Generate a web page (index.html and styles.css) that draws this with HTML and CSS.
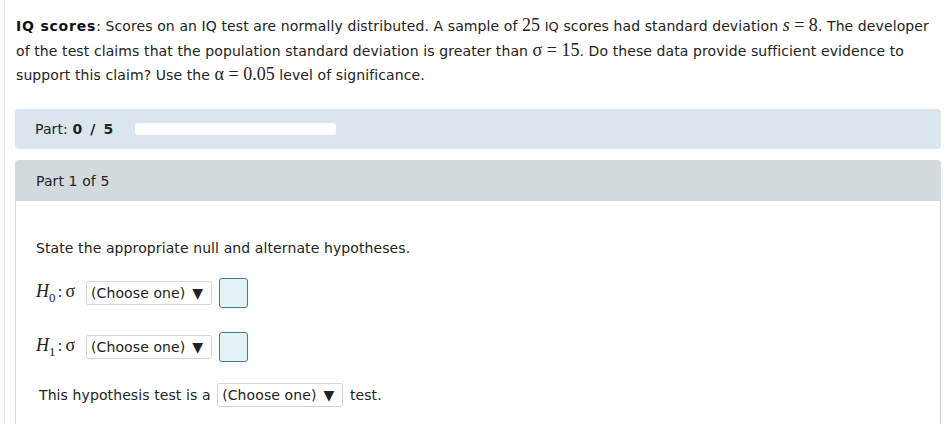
FILE: index.html
```html
<!DOCTYPE html>
<html lang="en">
<head>
    <meta charset="UTF-8">
    <title>IQ scores</title>
    <link rel="stylesheet" href="styles.css">
</head>
<body>
    <div class="page">
        <p class="question">
            <b>IQ scores</b>: Scores on an IQ test are normally distributed. A sample of <span class="num">25</span> <span class="sc">IQ</span> scores had standard deviation <span class="math"><i>s</i> = 8</span>. The developer
            of the test claims that the population standard deviation is greater than <span class="math">σ = 15</span>. Do these data provide sufficient evidence to
            support this claim? Use the <span class="math">α = 0.05</span> level of significance.
        </p>

        <div class="progress">
            <span>Part: <b>0 / 5</b></span>
            <div class="track"></div>
        </div>

        <div class="part">
            <div class="part-head">Part 1 of 5</div>
            <div class="part-body">
                <p class="prompt">State the appropriate null and alternate hypotheses.</p>

                <div class="hyp">
                    <span class="h-label"><i>H</i><sub>0</sub><span class="colon">:</span>σ</span>
                    <span class="choose">(Choose one)<span class="arrow">▼</span></span>
                    <span class="answer"></span>
                </div>

                <div class="hyp">
                    <span class="h-label"><i>H</i><sub>1</sub><span class="colon">:</span>σ</span>
                    <span class="choose">(Choose one)<span class="arrow">▼</span></span>
                    <span class="answer"></span>
                </div>

                <div class="test-row">
                    This hypothesis test is a
                    <span class="choose">(Choose one)<span class="arrow">▼</span></span>
                    test.
                </div>
            </div>
        </div>
    </div>
</body>
</html>
```

FILE: styles.css
```css
body {
    margin: 0;
    font-family: "DejaVu Sans", Verdana, sans-serif;
    font-size: 14px;
    letter-spacing: 0.1px;
    color: #222;
    background: white;
}

.page {
    margin-left: 4px;
    border-left: 1px solid #e2e2e2;
    min-height: 424px;
    padding: 14px 7px 0 10px;
}

.question {
    margin: 0 0 22px;
    padding-left: 1px;
    line-height: 24px;
    color: #222;
}

.question b {
    color: #111;
    letter-spacing: 0.8px;
}

.num,
.math {
    font-family: "Liberation Serif", "Times New Roman", serif;
    font-size: 18px;
    line-height: 0;
    letter-spacing: 0;
}

.sc {
    font-size: 13px;
}

.progress {
    display: flex;
    align-items: center;
    gap: 20px;
    height: 40px;
    padding: 0 20px;
    background: #dae5ef;
    border-radius: 4px;
    margin-bottom: 11px;
}

.progress b {
    letter-spacing: 1.6px;
}

.track {
    width: 201px;
    height: 12px;
    background: white;
    border-radius: 3px;
}

.part-head {
    height: 41px;
    line-height: 43px;
    padding-left: 21px;
    background: #d2dadd;
    border-radius: 4px 4px 0 0;
}

.part-body {
    border-left: 1px solid #ddd;
    border-right: 1px solid #ccc;
    padding: 39px 20px 16px;
    min-height: 180px;
}

.prompt {
    margin: 0 0 22px;
}

.hyp {
    display: flex;
    align-items: center;
    height: 30px;
    margin-bottom: 24px;
}

.h-label {
    font-family: "Liberation Serif", "Times New Roman", serif;
    font-size: 18px;
    letter-spacing: 0;
    width: 50px;
    white-space: nowrap;
}

.h-label sub {
    font-size: 13px;
    vertical-align: -5px;
}

.colon {
    margin: 0 3px 0 2px;
    font-family: "DejaVu Sans", sans-serif;
    font-size: 15px;
}

.choose {
    display: inline-block;
    height: 22px;
    line-height: 22px;
    padding: 0 8px 0 4px;
    border: 1px solid #d6d6d6;
    border-radius: 2px;
    background: white;
    white-space: nowrap;
}

.arrow {
    margin-left: 7px;
}

.answer {
    width: 27px;
    height: 28px;
    margin-left: 7px;
    border: 1px solid #3f7d89;
    border-radius: 3px;
    background: #e4f2f6;
}

.test-row {
    padding-left: 3px;
    margin-top: -3px;
}

.test-row .choose {
    margin: 0 2px;
}
```
